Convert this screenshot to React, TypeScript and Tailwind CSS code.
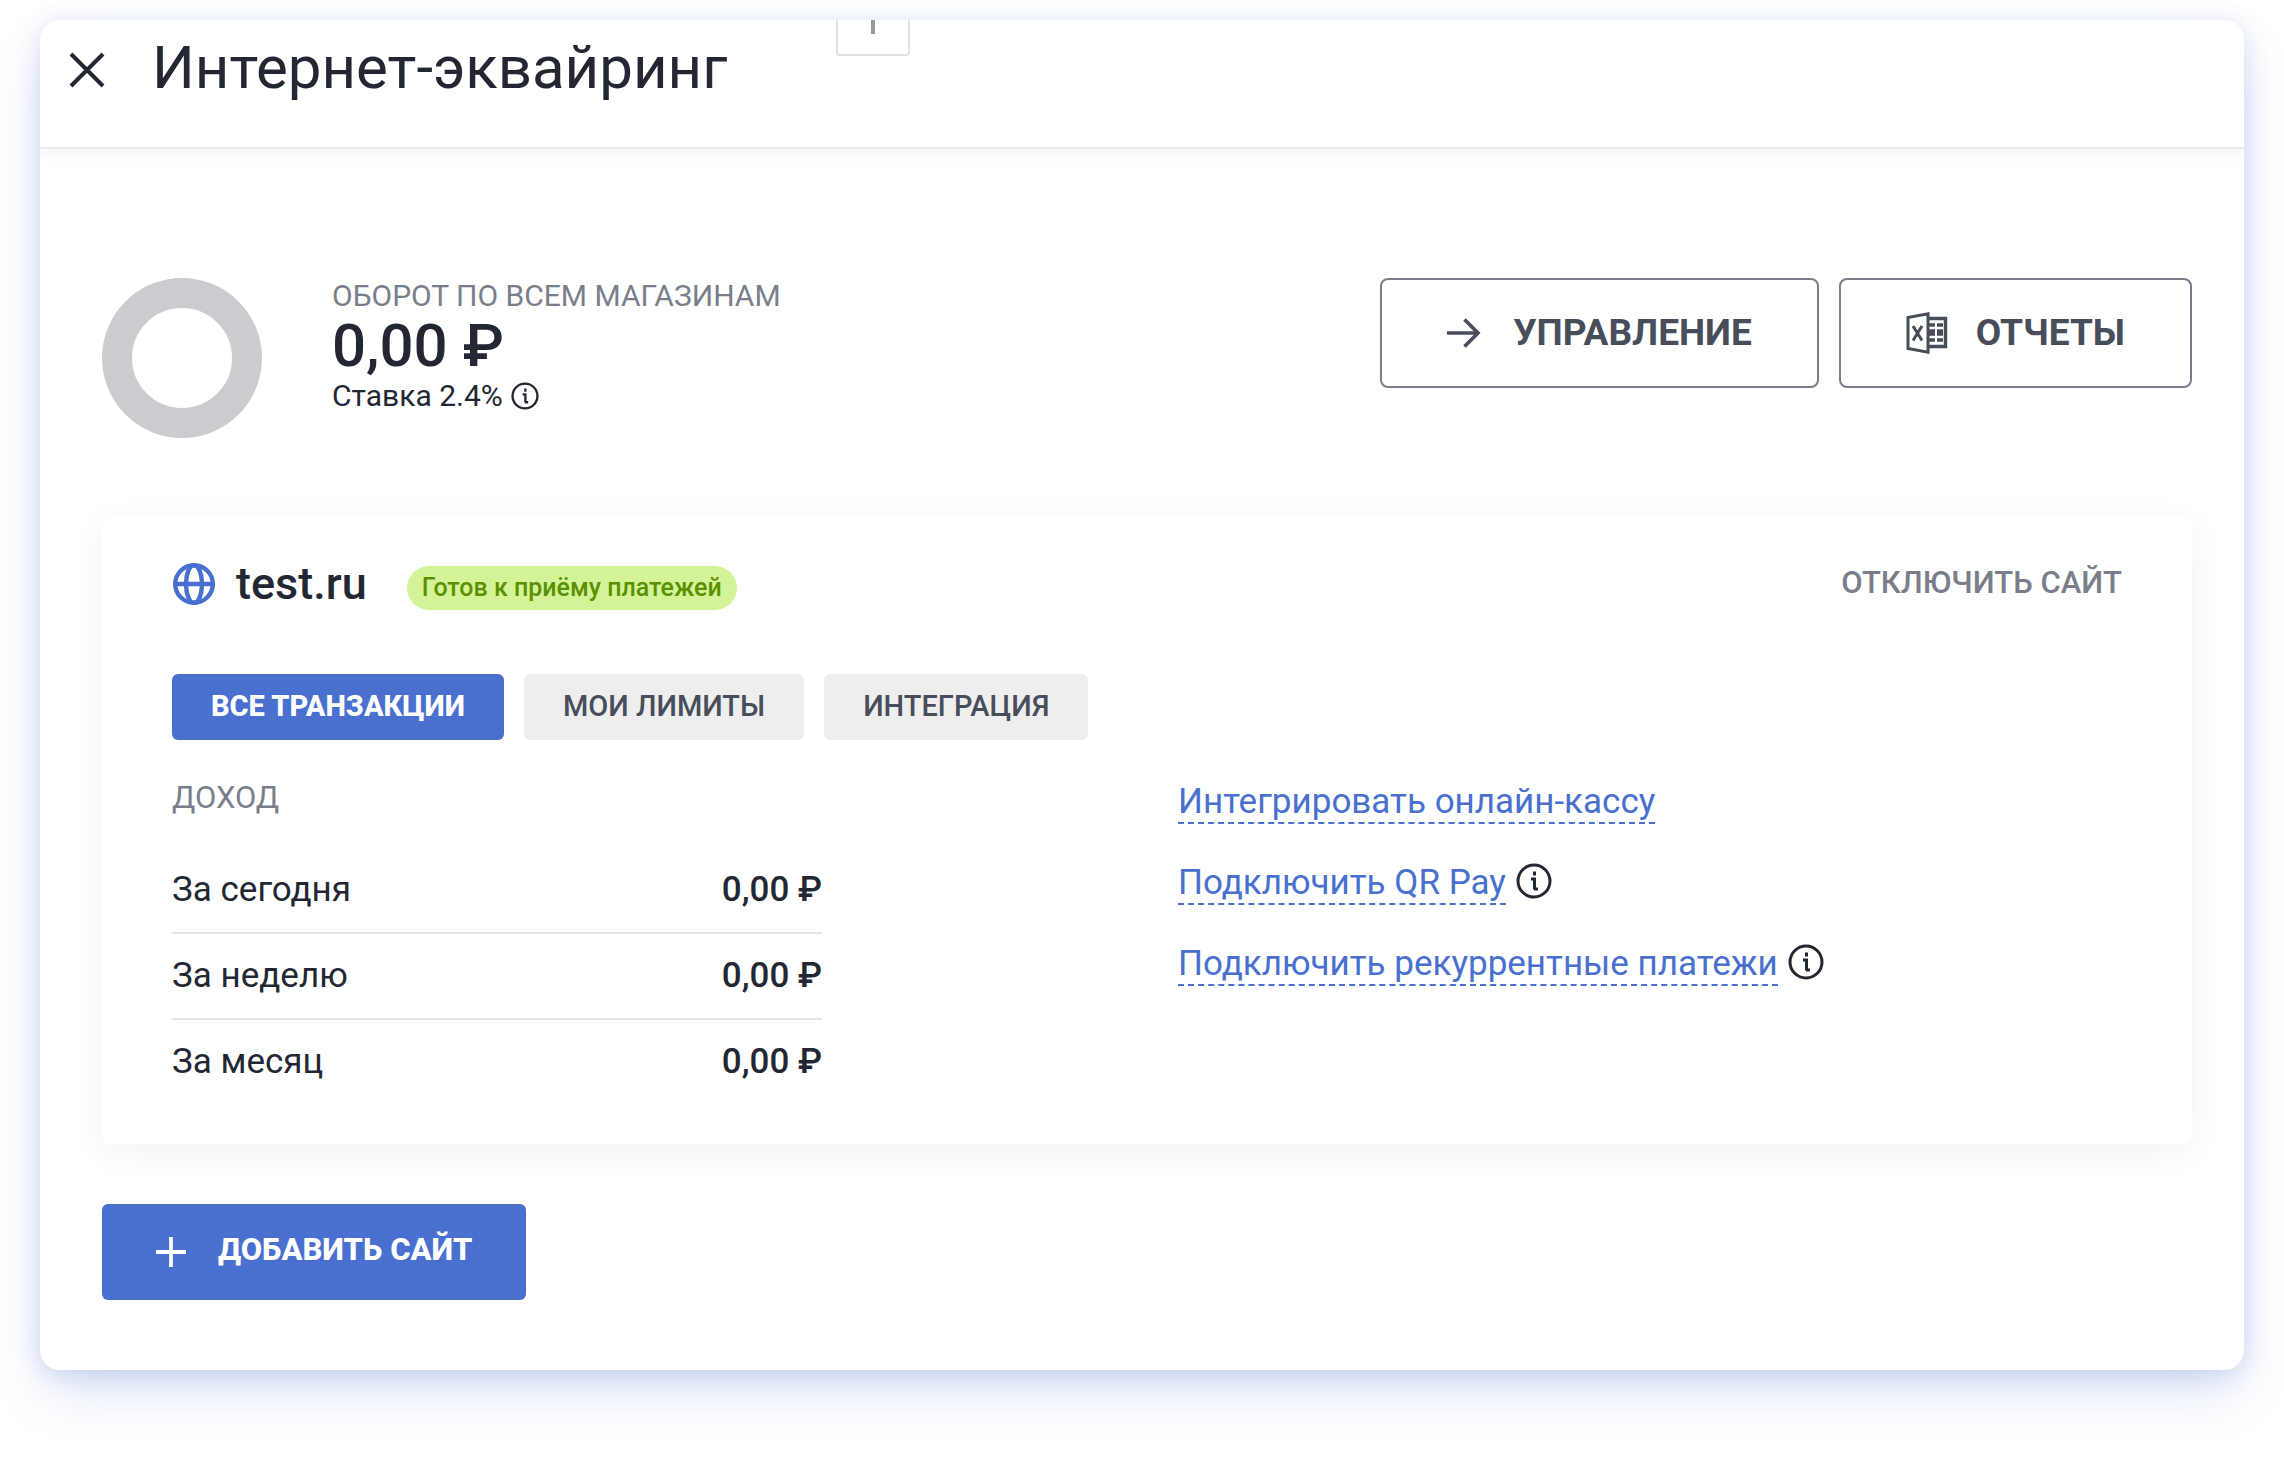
import { ReactNode, SVGProps } from "react";
import clsx from "clsx";

type IconProps = SVGProps<SVGSVGElement>;

const CloseIcon = (props: IconProps) => (
  <svg viewBox="0 0 36 36" fill="none" stroke="currentColor" strokeWidth="4" {...props}>
    <path d="M2 2l32 32M34 2L2 34" />
  </svg>
);

const ArrowIcon = (props: IconProps) => (
  <svg viewBox="0 0 34 30" fill="none" stroke="currentColor" strokeWidth="3.6" {...props}>
    <path d="M0 15h31M17.5 1.5L31 15L17.5 28.5" />
  </svg>
);

const PlusIcon = (props: IconProps) => (
  <svg viewBox="0 0 30 30" fill="none" stroke="currentColor" strokeWidth="3.8" {...props}>
    <path d="M15 0v30M0 15h30" />
  </svg>
);

const InfoIcon = (props: IconProps) => (
  <svg viewBox="0 0 36 36" fill="none" stroke="currentColor" strokeWidth="3" {...props}>
    <circle cx="18" cy="18" r="16" />
    <path d="M18.5 8.5v4M15 16h3.5v10.5M18 26h4" />
  </svg>
);

const GlobeIcon = (props: IconProps) => (
  <svg viewBox="0 0 44 44" fill="none" stroke="currentColor" strokeWidth="4.4" {...props}>
    <circle cx="22" cy="22" r="18.8" />
    <ellipse cx="22" cy="22" rx="8" ry="18.8" />
    <path d="M3 22h38" />
  </svg>
);

const ExcelIcon = (props: IconProps) => (
  <svg viewBox="0 0 42 42" fill="none" stroke="currentColor" {...props}>
    <path d="M2 5.5L22 1.8v38.4L2 36.5z" strokeWidth="3" />
    <path d="M22 6.5h17.5v28H22" strokeWidth="3.4" />
    <path d="M7 14l9 14.5M16 14L7 28.5" strokeWidth="3" />
    <path d="M23 13h6M31 13h6M23 28h6M31 28h6" strokeWidth="3.4" />
    <path d="M23 20.5h6M31 20.5h6" strokeWidth="6.6" />
  </svg>
);

const TABS = ["Все транзакции", "Мои лимиты", "Интеграция"];

const INCOME = [
  { period: "За сегодня", amount: "0,00 ₽" },
  { period: "За неделю", amount: "0,00 ₽" },
  { period: "За месяц", amount: "0,00 ₽" },
];

const SERVICES = [
  { title: "Интегрировать онлайн-кассу", hasInfo: false },
  { title: "Подключить QR Pay", hasInfo: true },
  { title: "Подключить рекуррентные платежи", hasInfo: true },
];

function OutlineButton({ icon, children }: { icon: ReactNode; children: ReactNode }) {
  return (
    <button
      type="button"
      className="flex h-[110px] items-center rounded-lg border-2 border-[#7a7e8b] px-[65px] text-[37px] font-bold text-[#484d5b] uppercase"
    >
      {icon}
      {children}
    </button>
  );
}

function Header() {
  return (
    <header className="relative flex h-[129px] items-start gap-[47px] border-b-2 border-[#ebebeb] px-[29px] shadow-[0_4px_16px_rgba(0,0,0,0.05)]">
      <button type="button" aria-label="Закрыть" className="mt-8 text-[#232733]">
        <CloseIcon className="size-9" />
      </button>
      <h1 className="mt-3 text-[60px] leading-[72px]">Интернет-эквайринг</h1>
      <div className="absolute top-0 left-[796px] flex h-9 w-[74px] justify-center rounded-b border-2 border-t-0 border-[#e2e2e2]">
        <span className="h-3.5 w-1 bg-[#999999]" />
      </div>
    </header>
  );
}

function Turnover() {
  return (
    <section className="flex items-start justify-between">
      <div className="flex gap-[70px]">
        <div className="size-40 rounded-full border-[30px] border-[#cbccd0]" />
        <div>
          <div className="text-[30px] leading-9 text-[#7a7e8b] uppercase">
            Оборот по всем магазинам
          </div>
          <div className="text-[60px] leading-[64px] font-medium">0,00 ₽</div>
          <div className="flex items-center gap-2 text-[30px] leading-9">
            Ставка 2.4%
            <InfoIcon className="size-7" />
          </div>
        </div>
      </div>
      <div className="flex gap-5">
        <OutlineButton icon={<ArrowIcon className="mr-8 h-[30px] w-[34px]" />}>
          Управление
        </OutlineButton>
        <OutlineButton icon={<ExcelIcon className="mr-7 size-[42px]" />}>
          Отчеты
        </OutlineButton>
      </div>
    </section>
  );
}

function SiteCard() {
  return (
    <section className="mt-[78px] rounded-lg px-[70px] pt-[42px] pb-10 shadow-[0_8px_36px_rgba(0,0,0,0.05)]">
      <div className="flex items-center">
        <GlobeIcon className="size-11 text-[#4970cf]" />
        <h2 className="ml-5 text-[45px] leading-[52px] font-medium">test.ru</h2>
        <span className="ml-10 self-end rounded-full bg-[#d4f397] px-[15px] text-[25px] leading-[44px] font-medium text-[#5b9100]">
          Готов к приёму платежей
        </span>
        <button
          type="button"
          className="ml-auto self-start text-[31px] leading-[50px] font-medium text-[#7a7e8b] uppercase"
        >
          Отключить сайт
        </button>
      </div>

      <div className="mt-16 flex gap-5">
        {TABS.map((tab, index) => (
          <button
            key={tab}
            type="button"
            className={clsx(
              "h-[66px] rounded-md px-[39px] text-[29px] uppercase",
              index === 0
                ? "bg-[#4970cf] font-extrabold text-white"
                : "bg-[#eeeeee] font-medium text-[#484d5b]"
            )}
          >
            {tab}
          </button>
        ))}
      </div>

      <div className="mt-10 grid grid-cols-[650px_1fr] gap-x-[356px]">
        <div>
          <h3 className="text-[31px] leading-9 text-[#7a7e8b] uppercase">Доход</h3>
          <table className="mt-8 w-full text-[35px] leading-[84px]">
            <tbody>
              {INCOME.map((row) => (
                <tr key={row.period} className="border-b-2 border-[#e5e5e5] last:border-b-0">
                  <td className="p-0">{row.period}</td>
                  <td className="p-0 text-right font-medium">{row.amount}</td>
                </tr>
              ))}
            </tbody>
          </table>
        </div>
        <ul className="flex flex-col gap-[39px] pt-0.5 text-[35px]">
          {SERVICES.map((service) => (
            <li key={service.title} className="flex items-start gap-2.5">
              <a href="#" className="border-b-2 border-dashed border-[#4970cf] leading-10 text-[#4970cf]">
                {service.title}
              </a>
              {service.hasInfo && <InfoIcon className="size-9" />}
            </li>
          ))}
        </ul>
      </div>
    </section>
  );
}

export default function App() {
  return (
    <div className="px-10 pt-5 pb-[100px] font-[Roboto,sans-serif] text-[#232733]">
      <main className="overflow-clip rounded-[20px] shadow-[0_4px_24px_rgba(73,112,207,0.2),0_26px_56px_-8px_rgba(73,112,207,0.22)]">
        <Header />
        <div className="pt-[129px] pr-[52px] pb-[70px] pl-[62px]">
          <Turnover />
          <SiteCard />
          <button
            type="button"
            className="mt-[60px] flex h-24 items-center gap-8 rounded-md bg-[#4970cf] px-[54px] text-[31px] font-extrabold text-white uppercase"
          >
            <PlusIcon className="size-[30px]" />
            <span className="pb-1">Добавить сайт</span>
          </button>
        </div>
      </main>
    </div>
  );
}
